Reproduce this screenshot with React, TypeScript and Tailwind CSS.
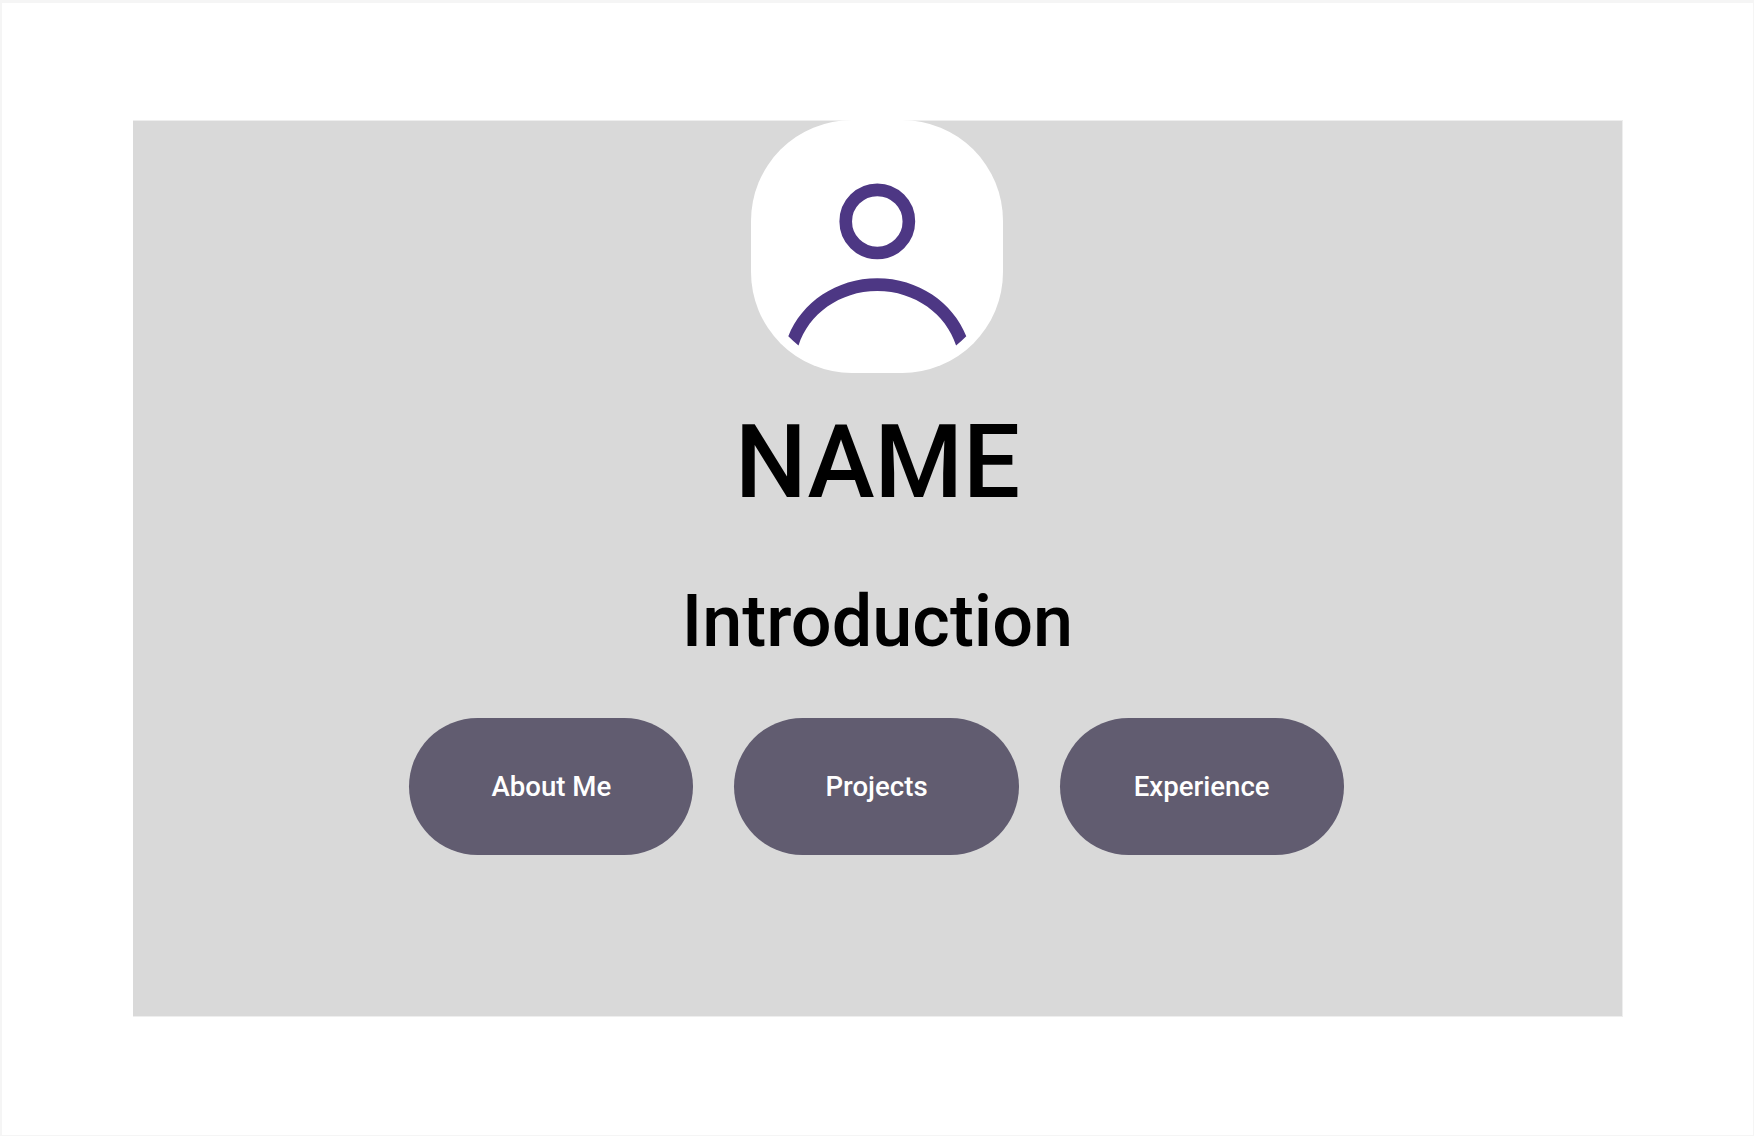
const links = ['About Me', 'Projects', 'Experience'];

function Avatar() {
  return (
    <div className="-mt-px mr-px flex h-[253px] w-[252.6px] shrink-0 rounded-[101px] bg-white">
      <svg viewBox="0 -0.06 40 40" className="h-[252.6px] w-[252.6px]" fill="none">
        <circle cx="20" cy="16" r="5" stroke="#4d3784" strokeWidth="2" />
        <path
          d="M20 25C13.5257 25 8.00952 28.8284 5.9087 34.192C6.4204 34.7001 6.95934 35.1812 7.5233 35.6328C9.08827 30.7077 13.997 27 20 27C26.003 27 30.9117 30.7077 32.4767 35.6328C33.0407 35.1812 33.5796 34.7001 34.0913 34.192C31.9905 28.8284 26.4743 25 20 25Z"
          fill="#4d3784"
        />
      </svg>
    </div>
  );
}

export default function App() {
  return (
    <div className="flex h-[1136px] w-[1754px] border-t-3 border-r border-b border-l-2 border-[#f5f5f5] bg-white pt-[117px] pl-[131px] font-[Roboto,sans-serif] font-medium">
      <main className="flex h-[897px] w-[1490px] flex-col items-center border-t border-r border-b border-[#eeeeee] bg-[#d9d9d9] text-black">
        <Avatar />
        <h1 className="mt-[30px] text-[101.1px] leading-[120px]">NAME</h1>
        <p className="mt-[57px] text-[72px] leading-[84px]">Introduction</p>
        <nav className="mt-[54px] mr-[2px] flex gap-[41px]">
          {links.map((label) => (
            <button
              key={label}
              className="flex h-[137px] w-[284.2px] items-center justify-center rounded-full bg-[#615c70] text-[27.6px] text-white"
            >
              {label}
            </button>
          ))}
        </nav>
      </main>
    </div>
  );
}
